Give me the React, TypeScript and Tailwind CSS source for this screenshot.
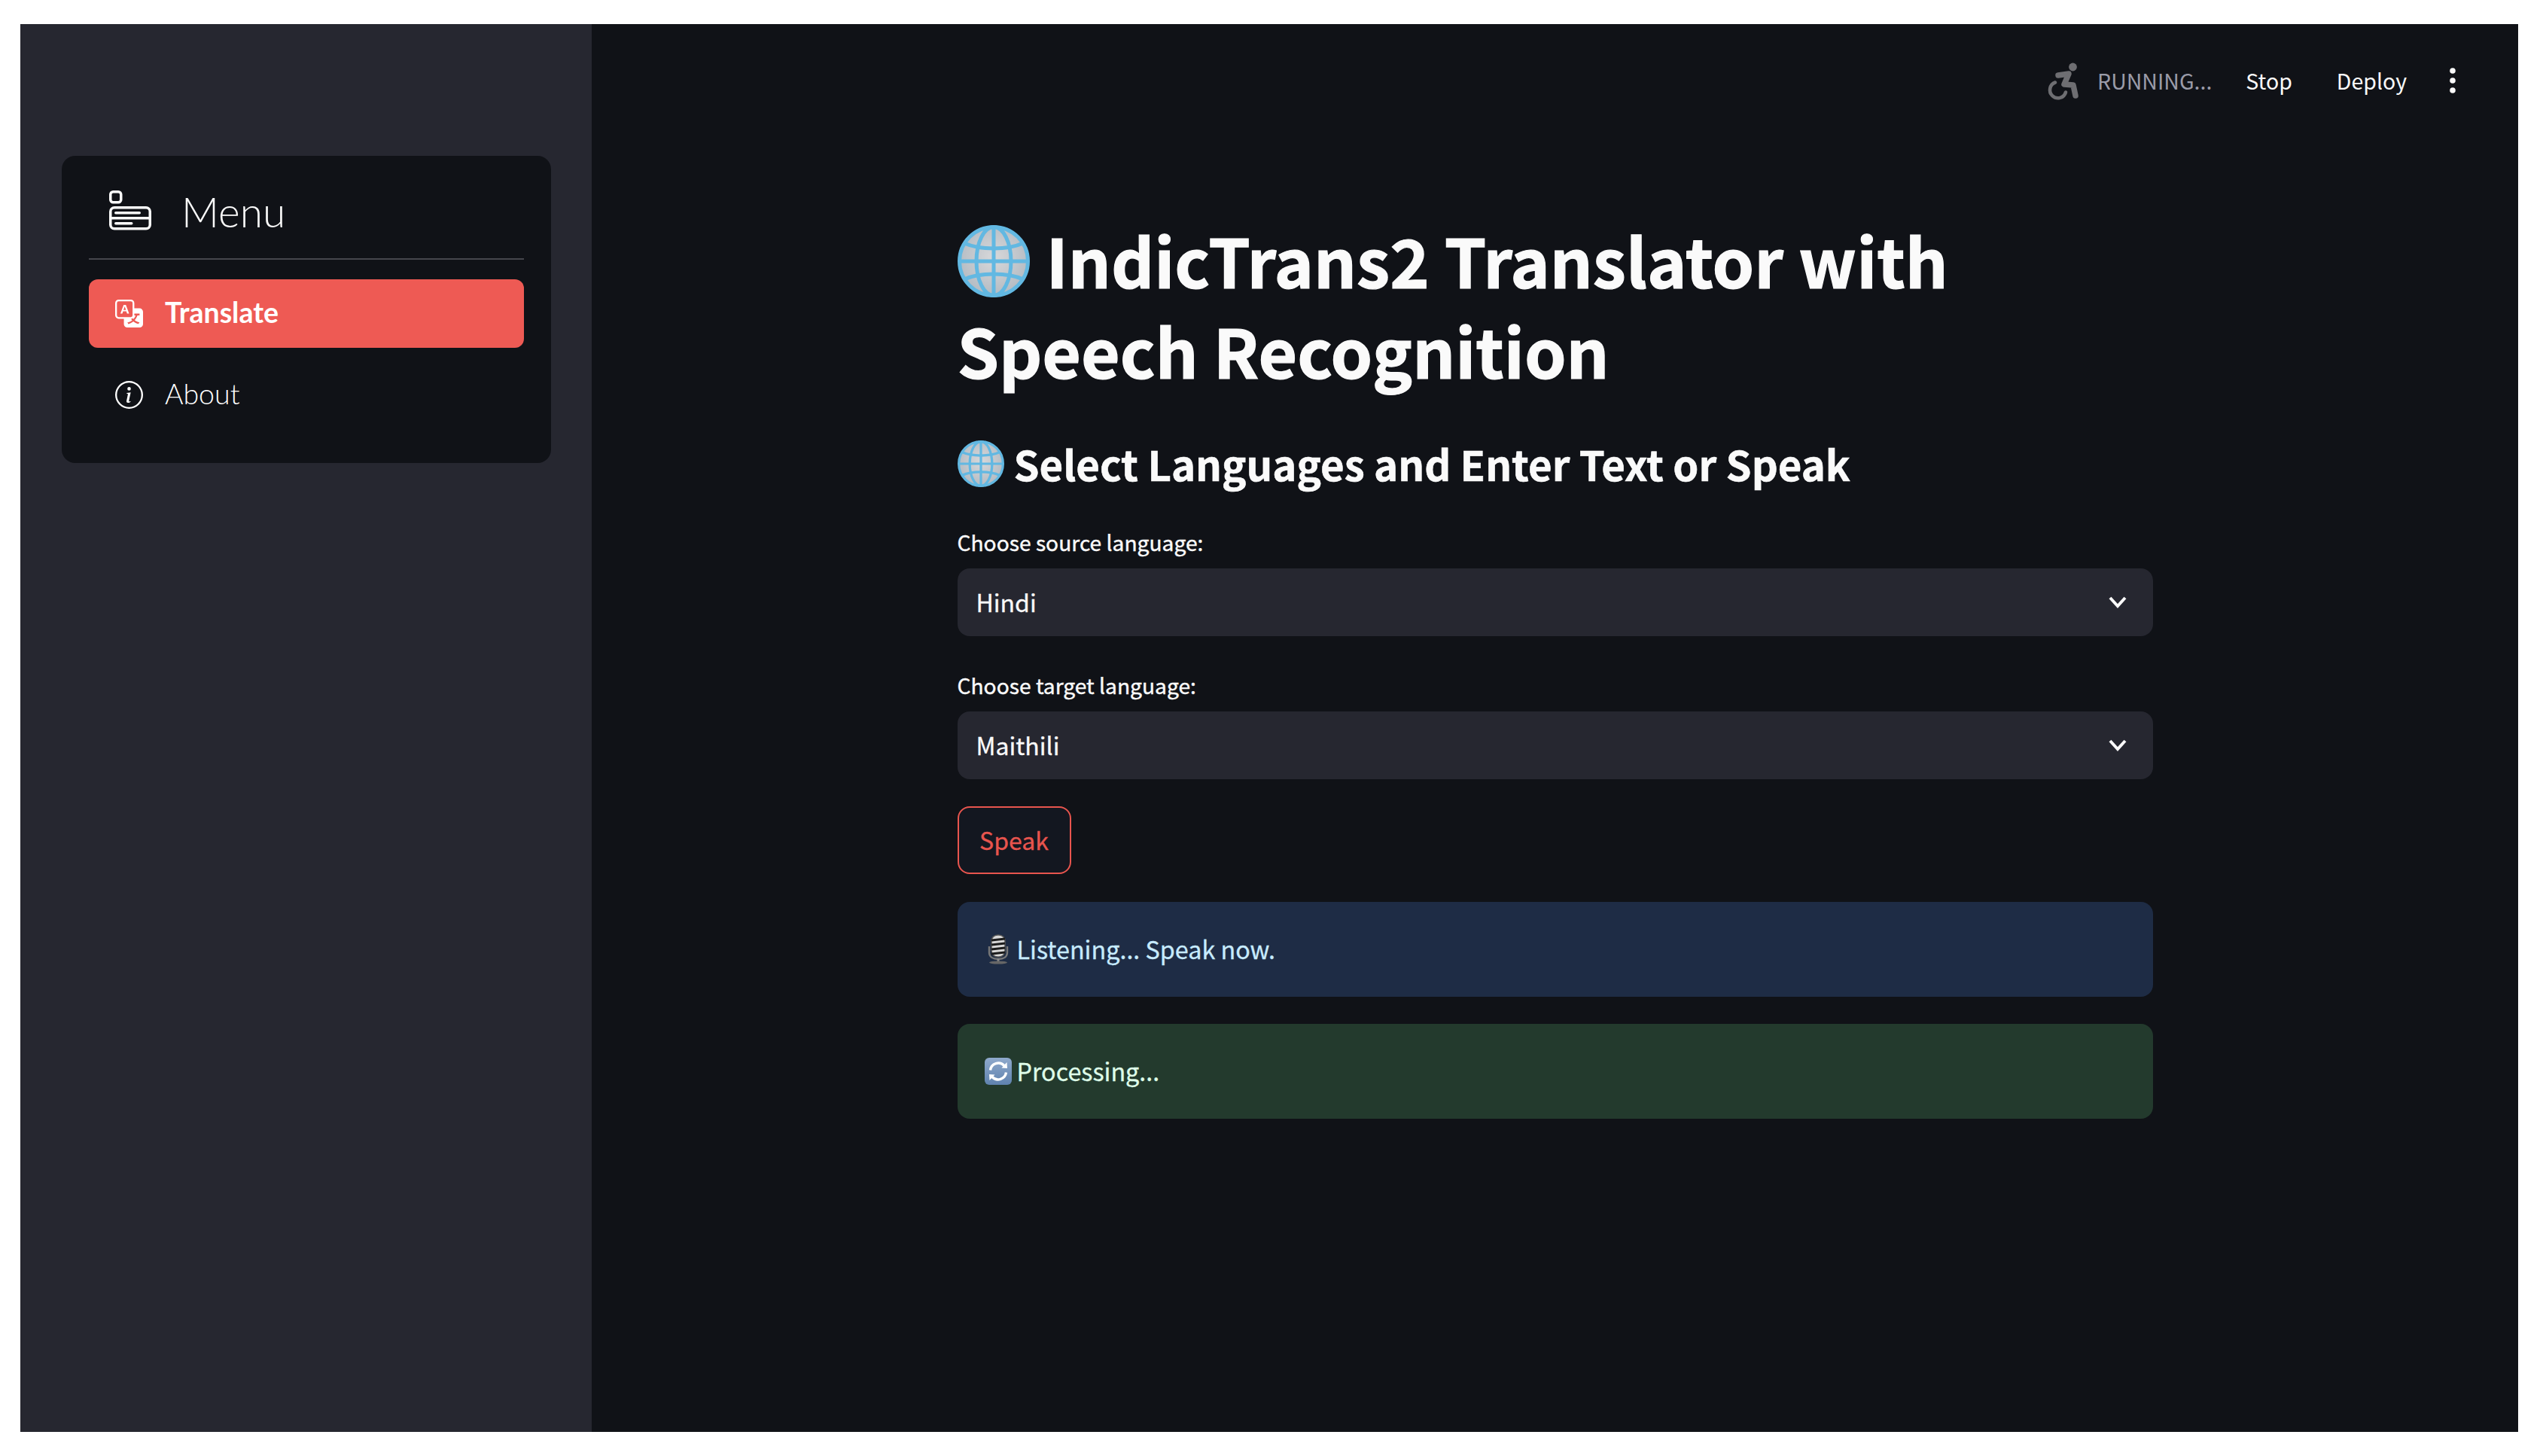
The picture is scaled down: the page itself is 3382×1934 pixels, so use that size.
import React from "react";
import { BsMenuApp, BsTranslate, BsInfoCircle } from "react-icons/bs";

const Globe = ({ className }: { className: string }) => (
  <svg viewBox="0 0 96 96" className={className}>
    <defs>
      <radialGradient id="gf" cx="50%" cy="45%" r="60%">
        <stop offset="0%" stopColor="#d8d8da" />
        <stop offset="100%" stopColor="#b0b8c0" />
      </radialGradient>
    </defs>
    <circle cx="48" cy="48" r="46" fill="url(#gf)" />
    <g fill="none" stroke="#62b8e2" strokeWidth="5">
      <circle cx="48" cy="48" r="45.5" />
      <ellipse cx="48" cy="48" rx="23" ry="45.5" />
      <path d="M48 2v92M2.5 48h91" />
      <path d="M9 24c11 5 24 7 39 7s28-2 39-7M9 72c11-5 24-7 39-7s28 2 39 7" />
    </g>
  </svg>
);

const Mic = () => (
  <svg viewBox="0 0 36 40" className="w-[36px] h-[40px] shrink-0">
    <rect x="9" y="1" width="18" height="29" rx="8" fill="#d8d8d8" stroke="#555" strokeWidth="1.5" />
    <g stroke="#1c1c1c" strokeWidth="3">
      <path d="M9 8l18-2M9 14l18-2M9 20l18-2M9 26l18-2" />
    </g>
    <path d="M6 16v8c0 6 5 9 12 9s12-3 12-9v-8" fill="none" stroke="#777" strokeWidth="2.4" />
    <path d="M18 32v4" stroke="#888" strokeWidth="3" />
    <ellipse cx="18" cy="37.5" rx="12" ry="2" fill="#666" />
  </svg>
);

const Refresh = () => (
  <svg viewBox="0 0 36 36" className="w-[36px] h-[36px] shrink-0">
    <defs>
      <linearGradient id="rf" x1="0" y1="0" x2="0" y2="1">
        <stop offset="0%" stopColor="#8fa9cc" />
        <stop offset="100%" stopColor="#5f82ae" />
      </linearGradient>
    </defs>
    <rect width="36" height="36" rx="6" fill="url(#rf)" />
    <g fill="none" stroke="#fff" strokeWidth="3.4">
      <path d="M7.5 16.5a10.8 10.8 0 0 1 18.5-6" />
      <path d="M28.5 19.5a10.8 10.8 0 0 1-18.5 6" />
    </g>
    <path d="M22.5 13.5l7.5 0.5-0.5-8zM13.5 22.5l-7.5-0.5 0.5 8z" fill="#fff" />
  </svg>
);

const Wheelchair = () => (
  <svg viewBox="0 0 60 65" className="w-[60px] h-[65px] shrink-0" fill="none" stroke="#6e6e72" strokeLinecap="round" strokeLinejoin="round">
    <circle cx="44.5" cy="14" r="5.4" fill="#6e6e72" stroke="none" />
    <path d="M25 25 L39 23 L33 37 L45 38 L48 52" strokeWidth="7.5" />
    <path d="M21 34.5 A10.7 10.7 0 1 0 35 47.5" strokeWidth="4.6" />
  </svg>
);

const Chevron = () => (
  <svg viewBox="0 0 24 24" className="w-[24px] h-[24px]" fill="none" stroke="#fafafa" strokeWidth="4">
    <path d="M2 6l10 11L22 6" />
  </svg>
);

const sans = 'font-["Noto_Sans_CJK_SC","Liberation_Sans",sans-serif]';

const Select = ({ label, value }: { label: string; value: string }) => (
  <div className="flex flex-col">
    <label className="h-[51px] text-[28.2px] leading-[32px] text-[#fafafa] [-webkit-text-stroke:0.4px_#fafafa]">{label}</label>
    <div className="h-[90px] rounded-[16px] bg-[#262730] pl-[25px] pr-[35px] flex items-center justify-between text-[32px] text-[#fafafa] [-webkit-text-stroke:0.3px_#fafafa]">
      <span className="pb-[2px]">{value}</span>
      <Chevron />
    </div>
  </div>
);

export default function App() {
  return (
    <div className={`bg-white pt-[32px] pb-[32px] pl-[27px] pr-[37px] ${sans}`}>
      <div className="flex h-[1870px] bg-[#101217]">
        <aside className="w-[759px] bg-[#262730] pt-[175px] pl-[55px] pr-[54px]">
          <div className='rounded-[18px] bg-[#101217] h-[408px] px-[36px] font-["Lato",sans-serif] text-[#fafafa]'>
            <div className="flex items-center h-[138px] pt-[12px] pl-[27px] border-b-2 border-[#45464c]">
              <BsMenuApp className="w-[56px] h-[56px] shrink-0 mr-[40px]" />
              <span className="text-[55px] font-light">Menu</span>
            </div>
            <div className="mt-[26px] h-[91px] rounded-[12px] bg-[#ee5a54] flex items-center pl-[35px] text-[37.5px] font-bold text-white">
              <BsTranslate className="w-[37px] h-[37px] mr-[29px]" />
              <span className="pb-[3px]">Translate</span>
            </div>
            <div className="mt-[17px] h-[91px] flex items-center pl-[35px] text-[37.5px] font-light text-white">
              <BsInfoCircle className="w-[37px] h-[37px] mr-[29px]" />
              <span className="pb-[3px]">About</span>
            </div>
          </div>
        </aside>
        <main className="flex-1 flex flex-col">
          <header className="h-[150px] flex items-center justify-end pr-[83px] text-[28.5px] text-[#fafafa]">
            <Wheelchair />
            <span className="ml-[17px] text-[#9a9ba8] mr-[45px]">RUNNING...</span>
            <span className="mr-[59px]">Stop</span>
            <span className="mr-[57px]">Deploy</span>
            <svg viewBox="0 0 8 36" className="w-[8px] h-[36px]" fill="#fafafa">
              <circle cx="4" cy="5" r="3.8" />
              <circle cx="4" cy="18" r="3.8" />
              <circle cx="4" cy="31" r="3.8" />
            </svg>
          </header>
          <div className="w-[1588px] mx-auto flex flex-col">
            <h1 className="mt-[103px] text-[89px] leading-[120px] font-bold text-[#fafafa] [-webkit-text-stroke:1.2px_#fafafa]">
              <Globe className="inline-block w-[96px] h-[96px] align-[-12px] mr-[22px]" />
              IndicTrans2 Translator with Speech Recognition
            </h1>
            <h2 className="mt-[46px] flex items-center h-[90px] text-[54.5px] font-bold text-[#fafafa] [-webkit-text-stroke:0.6px_#fafafa]">
              <Globe className="w-[62px] h-[62px] mr-[13px]" />
              Select Languages and Enter Text or Speak
            </h2>
            <div className="mt-[43px]">
              <Select label="Choose source language:" value="Hindi" />
            </div>
            <div className="mt-[49px]">
              <Select label="Choose target language:" value="Maithili" />
            </div>
            <button className="mt-[36px] self-start w-[151px] h-[90px] rounded-[16px] border-[2.5px] border-[#e8554e] bg-[#131720] text-[#e8554e] text-[32px] [-webkit-text-stroke:0.3px_#e8554e]">
              <span className="block pb-[2px]">Speak</span>
            </button>
            <div className="mt-[37px] h-[126px] rounded-[16px] bg-[#1e2c45] text-[#c7ebff] text-[32.3px] flex items-center pl-[36px] [-webkit-text-stroke:0.3px_#c7ebff]">
              <Mic />
              <span className="ml-[7px] pb-[2px]">Listening... Speak now.</span>
            </div>
            <div className="mt-[36px] h-[126px] rounded-[16px] bg-[#233a2d] text-[#dffde9] text-[32.3px] flex items-center pl-[36px] [-webkit-text-stroke:0.3px_#dffde9]">
              <Refresh />
              <span className="ml-[7px] pb-[2px]">Processing...</span>
            </div>
          </div>
        </main>
      </div>
    </div>
  );
}
